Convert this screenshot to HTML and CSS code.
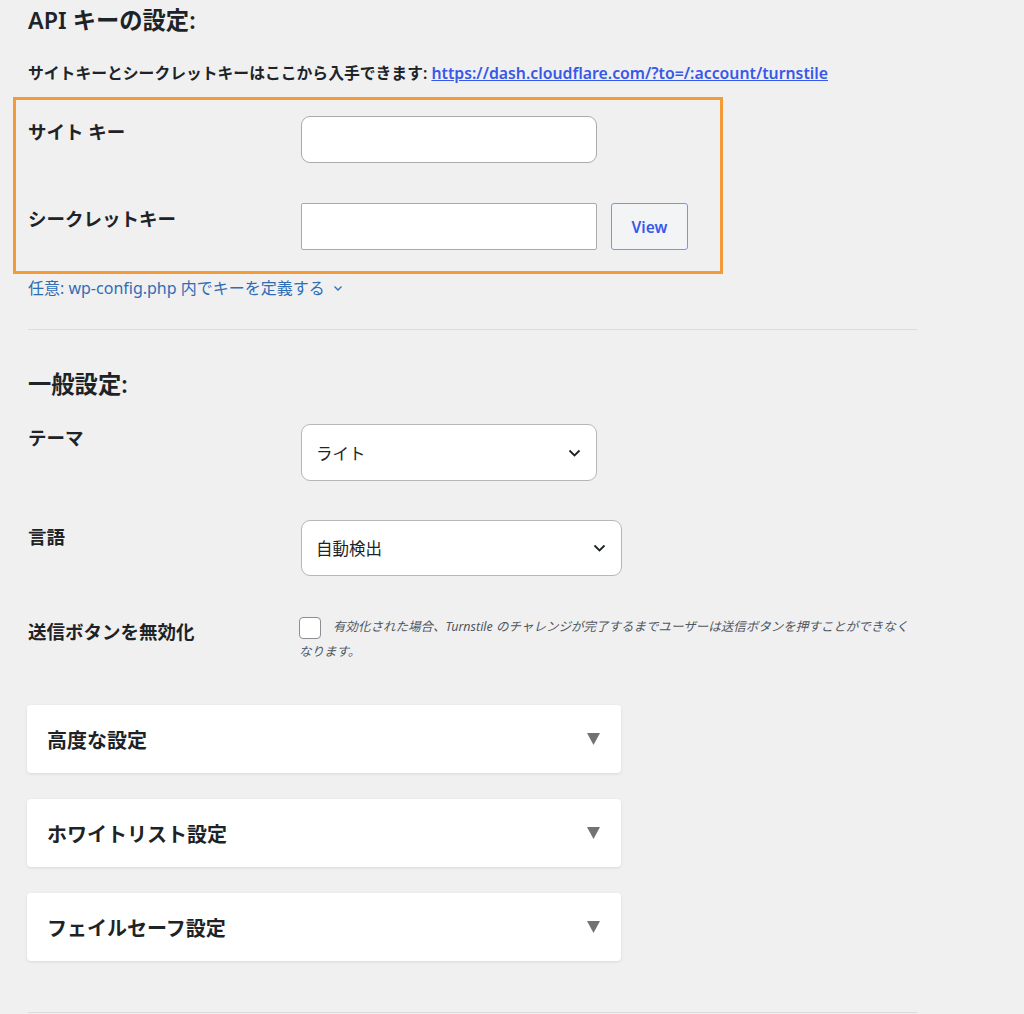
FILE: index.html
```html
<!DOCTYPE html>
<html lang="ja">

<head>
    <meta charset="UTF-8">
    <meta name="viewport" content="width=device-width, initial-scale=1.0">
    <title>Turnstile 設定</title>

    <link rel="stylesheet" href="styles.css">
</head>

<body>

    <div class="wrap">
        <h2 class="section-title">API キーの設定:</h2>
        <p class="intro">サイトキーとシークレットキーはここから入手できます: <a href="#">https://dash.cloudflare.com/?to=/:account/turnstile</a></p>

        <div class="keys-box">
            <div class="row">
                <label class="row-label">サイト キー</label>
                <div class="row-field">
                    <input type="text" class="text-input rounded">
                </div>
            </div>
            <div class="row">
                <label class="row-label">シークレットキー</label>
                <div class="row-field">
                    <input type="password" class="text-input">
                    <button class="view-btn">View</button>
                </div>
            </div>
        </div>

        <a href="#" class="toggle-link">任意: wp-config.php 内でキーを定義する
            <svg width="10" height="8" viewBox="0 0 10 8"><path d="M1.5 2.5 5 6 8.5 2.5" fill="none" stroke="currentColor" stroke-width="1.3"/></svg>
        </a>

        <hr class="divider">

        <h2 class="section-title general">一般設定:</h2>

        <div class="row theme-row">
            <label class="row-label">テーマ</label>
            <div class="row-field">
                <div class="select theme-select">
                    <span>ライト</span>
                    <svg width="13" height="8" viewBox="0 0 13 8"><path d="M1.5 1.5 6.5 6.5 11.5 1.5" fill="none" stroke="#1d2327" stroke-width="1.8"/></svg>
                </div>
            </div>
        </div>

        <div class="row lang-row">
            <label class="row-label">言語</label>
            <div class="row-field">
                <div class="select lang-select">
                    <span>自動検出</span>
                    <svg width="13" height="8" viewBox="0 0 13 8"><path d="M1.5 1.5 6.5 6.5 11.5 1.5" fill="none" stroke="#1d2327" stroke-width="1.8"/></svg>
                </div>
            </div>
        </div>

        <div class="row submit-row">
            <label class="row-label">送信ボタンを無効化</label>
            <div class="row-field desc"><span class="checkbox"></span>有効化された場合、Turnstile のチャレンジが完了するまでユーザーは送信ボタンを押すことができなくなります。</div>
        </div>

        <div class="panel">
            <span>高度な設定</span>
            <svg width="13" height="12" viewBox="0 0 13 12"><polygon points="0,0 13,0 6.5,12" fill="#707275"/></svg>
        </div>
        <div class="panel">
            <span>ホワイトリスト設定</span>
            <svg width="13" height="12" viewBox="0 0 13 12"><polygon points="0,0 13,0 6.5,12" fill="#707275"/></svg>
        </div>
        <div class="panel">
            <span>フェイルセーフ設定</span>
            <svg width="13" height="12" viewBox="0 0 13 12"><polygon points="0,0 13,0 6.5,12" fill="#707275"/></svg>
        </div>

        <hr class="divider bottom">
    </div>

</body>

</html>
```

FILE: styles.css
```css
body {
    margin: 0;
    background-color: #f0f0f1;
    color: #1d2327;
    font-family: "Noto Sans", "Noto Sans CJK JP", sans-serif;
}

.wrap {
    width: 889px;
    padding: 0 0 0 28px;
}

.section-title {
    margin: 5px 0 0;
    font-size: 23.3px;
    line-height: 30px;
    font-weight: 600;
}

.section-title.general {
    margin-top: 39px;
}

.intro {
    margin: 26px 0 0;
    font-size: 15.8px;
    line-height: 24px;
    font-weight: 600;
}

.intro a {
    color: #3858e9;
}

.keys-box {
    width: 680px;
    margin: 12px 0 0 -15px;
    padding: 16px 12px 21px 12px;
    border: 3px solid #f29b38;
    display: flex;
    flex-direction: column;
    gap: 40px;
}

.row {
    display: grid;
    grid-template-columns: 273px 1fr;
}

.row-label {
    padding-top: 4px;
    font-size: 18.5px;
    line-height: 24px;
    font-weight: 600;
}

.row-field {
    display: flex;
    gap: 14px;
}

.text-input {
    box-sizing: border-box;
    width: 296px;
    height: 47px;
    margin: 0;
    border: 1px solid #a7aaad;
    border-radius: 2px;
    background: #fff;
}

.text-input.rounded {
    border-radius: 9px;
}

.view-btn {
    width: 77px;
    height: 47px;
    border: 1px solid #7d92ef;
    border-radius: 3px;
    background-color: #f3f4f6;
    color: #3858e9;
    font-family: inherit;
    font-size: 15.5px;
    font-weight: 600;
}

.toggle-link {
    display: inline-block;
    margin-top: 3px;
    color: #2f6db5;
    text-decoration: none;
    font-size: 16px;
    line-height: 22px;
}

.toggle-link svg {
    margin-left: 4px;
    vertical-align: 2px;
}

.divider {
    margin: 30px 0 0;
    border: none;
    border-top: 1px solid #dcdcde;
}

.divider.bottom {
    margin-top: 51px;
}

.theme-row {
    margin-top: 25px;
}

.theme-row .row-label {
    padding-top: 2px;
}

.lang-row {
    margin-top: 39px;
}

.lang-row .row-label {
    padding-top: 5px;
}

.select {
    box-sizing: border-box;
    display: flex;
    align-items: center;
    justify-content: space-between;
    padding: 0 15px 0 14px;
    border: 1px solid #b4b6b8;
    border-radius: 9px;
    background: #fff;
    font-size: 16.5px;
}

.theme-select {
    width: 296px;
    height: 57px;
}

.lang-select {
    width: 321px;
    height: 56px;
}

.submit-row {
    margin-top: 38px;
}

.submit-row .row-label {
    padding-top: 6px;
}

.desc {
    display: block;
    width: 616px;
    margin-left: -2px;
    color: #50575e;
    font-size: 12.5px;
    line-height: 25px;
    font-style: italic;
}

.checkbox {
    display: inline-block;
    box-sizing: border-box;
    width: 22px;
    height: 22px;
    margin-right: 12px;
    vertical-align: middle;
    border: 1.5px solid #8c8f94;
    border-radius: 4px;
    background: #fff;
}

.panel {
    box-sizing: border-box;
    width: 594px;
    height: 68px;
    margin: 26px 0 0 -1px;
    padding: 0 21px 0 20px;
    display: flex;
    align-items: center;
    justify-content: space-between;
    background: #fff;
    border-radius: 4px;
    box-shadow: 0 1px 3px rgba(0, 0, 0, 0.1);
    font-size: 20px;
    font-weight: 600;
}

.submit-row + .panel {
    margin-top: 41px;
}
```
